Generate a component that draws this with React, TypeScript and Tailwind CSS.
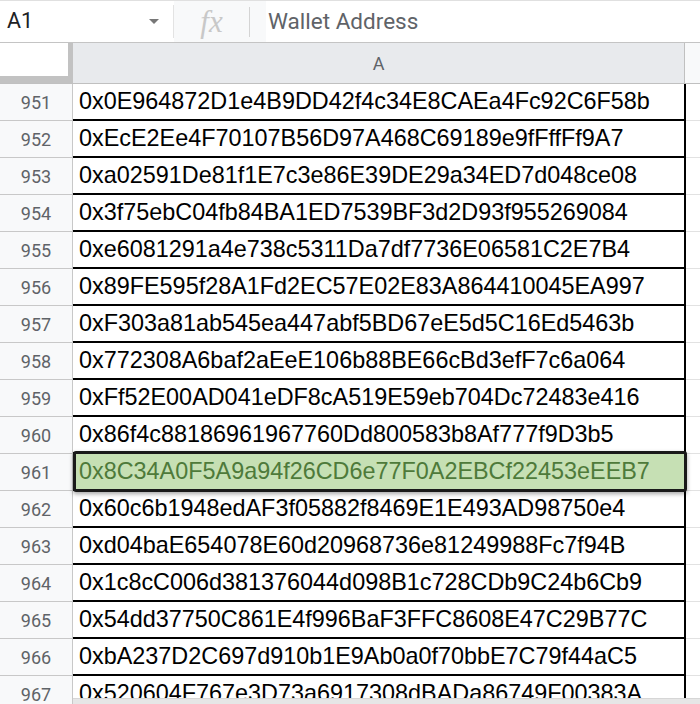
import React from 'react';

const rows: [number, string][] = [
  [951, '0x0E964872D1e4B9DD42f4c34E8CAEa4Fc92C6F58b'],
  [952, '0xEcE2Ee4F70107B56D97A468C69189e9fFffFf9A7'],
  [953, '0xa02591De81f1E7c3e86E39DE29a34ED7d048ce08'],
  [954, '0x3f75ebC04fb84BA1ED7539BF3d2D93f955269084'],
  [955, '0xe6081291a4e738c5311Da7df7736E06581C2E7B4'],
  [956, '0x89FE595f28A1Fd2EC57E02E83A864410045EA997'],
  [957, '0xF303a81ab545ea447abf5BD67eE5d5C16Ed5463b'],
  [958, '0x772308A6baf2aEeE106b88BE66cBd3efF7c6a064'],
  [959, '0xFf52E00AD041eDF8cA519E59eb704Dc72483e416'],
  [960, '0x86f4c88186961967760Dd800583b8Af777f9D3b5'],
  [961, '0x8C34A0F5A9a94f26CD6e77F0A2EBCf22453eEEB7'],
  [962, '0x60c6b1948edAF3f05882f8469E1E493AD98750e4'],
  [963, '0xd04baE654078E60d20968736e81249988Fc7f94B'],
  [964, '0x1c8cC006d381376044d098B1c728CDb9C24b6Cb9'],
  [965, '0x54dd37750C861E4f996BaF3FFC8608E47C29B77C'],
  [966, '0xbA237D2C697d910b1E9Ab0a0f70bbE7C79f44aC5'],
  [967, '0x520604F767e3D73a6917308dBADa86749F00383A'],
];

const SELECTED = 961;

export default function App() {
  return (
    <div className="w-[700px] h-[704px] overflow-hidden bg-white relative font-['Roboto',sans-serif]">
      {/* formula bar */}
      <div className="h-[43px] flex items-stretch border-t border-t-[#e0e0e0] border-b border-b-[#c4c4c4]">
        <div className="w-[174px] flex items-center justify-between pl-[7px] pr-[14px] border-r border-[#e3e3e3] my-[4px]">
          <span className="text-[21.5px] text-[#202124]">A1</span>
          <span className="w-0 h-0 border-l-[5px] border-r-[5px] border-t-[5px] border-l-transparent border-r-transparent border-t-[#777]" />
        </div>
        <div className="w-[92px] bg-[#f8f9fa] flex items-center">
          <span className="w-[75px] text-center text-[31px] italic text-[#c8c8c8] font-['Liberation_Serif',serif] leading-none">fx</span>
          <span className="w-px h-[30px] bg-[#d4d4d4]" />
        </div>
        <div className="flex items-center pl-[2px] text-[22.5px] text-[#606368]">Wallet Address</div>
      </div>

      {/* column header */}
      <div className="h-[41px] flex border-b border-[#c0c0c0]">
        <div className="w-[73px] bg-white border-r-[5px] border-b-[7px] border-[#c2c2c2]" />
        <div className="w-[612px] bg-[#e8eaed] border-r border-[#c0c0c0] flex items-center justify-center text-[18px] text-[#5f6368]">
          A
        </div>
        <div className="flex-1 bg-[#f8f9fa]" />
      </div>

      {/* rows */}
      {rows.map(([n, addr]) => {
        const sel = n === SELECTED;
        return (
          <div key={n} className="h-[37px] flex">
            <div className="w-[73px] shrink-0 bg-[#f8f9fa] border-r border-b border-[#c8c8c8] flex items-center justify-center text-[18px] text-[#5f6368]">
              {n}
            </div>
            <div
              className={
                sel
                  ? 'relative w-[613px] shrink-0 bg-[#c6e0b4] border-b-2 border-r-2 border-black flex items-center pl-[6px] text-[23.4px] text-[#4e7a3a] font-["Liberation_Sans",Arial,sans-serif] whitespace-nowrap'
                  : 'w-[613px] shrink-0 border-b-2 border-r-2 border-black flex items-center pl-[6px] text-[23.4px] text-black font-["Liberation_Sans",Arial,sans-serif] whitespace-nowrap'
              }
            >
              {addr}
              {sel && (
                <div className="absolute left-0 right-[-3px] top-[-3px] bottom-[-3px] border-[3px] border-[#1a1a1a] rounded-[3px] shadow-[0_2px_4px_rgba(0,0,0,0.35)]" />
              )}
            </div>
            <div className="flex-1 border-b border-[#e2e2e2]" />
          </div>
        );
      })}

      {/* horizontal scrollbar strip */}
      <div className="absolute left-[73px] right-0 bottom-0 h-[6px] bg-[#e6e6e6] border-t border-[#d6d6d6]" />
    </div>
  );
}
